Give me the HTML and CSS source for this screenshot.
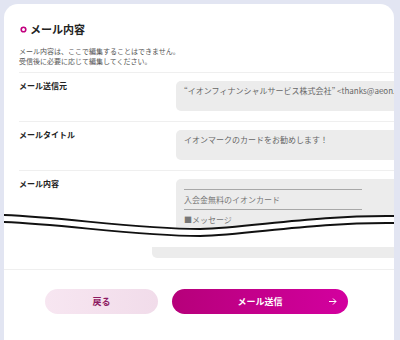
FILE: index.html
```html
<!DOCTYPE html>
<html lang="ja">
<head>
  <meta charset="UTF-8">
  <title>メール内容</title>
  <link rel="stylesheet" href="styles.css">
</head>
<body>
<div class="card">
  <div class="head">
    <h2 class="title">
      <svg class="title-mark" width="7" height="7" viewBox="0 0 7 7"><circle cx="3.5" cy="3.5" r="2.3" fill="none" stroke="#c2007f" stroke-width="1.6"/></svg>
      メール内容
    </h2>
    <p class="desc">メール内容は、ここで編集することはできません。<br>受信後に必要に応じて編集してください。</p>
  </div>

  <div class="row">
    <div class="label">メール送信元</div>
    <div class="field">“イオンフィナンシャルサービス株式会社” &lt;thanks@aeon.co.jp&gt;</div>
  </div>
  <div class="row">
    <div class="label">メールタイトル</div>
    <div class="field">イオンマークのカードをお勧めします！</div>
  </div>
  <div class="row row-body">
    <div class="label">メール内容</div>
    <div class="field field-body">
      <div class="rule"></div>
      <div class="body-line">入会金無料のイオンカード</div>
      <div class="rule"></div>
      <div class="body-line">■メッセージ</div>
    </div>
  </div>
  <div class="field-tail"></div>

  <!-- cut mark over the long mail body -->
  <svg class="cut" width="390" height="42" viewBox="0 0 390 42">
    <path d="M-2 10 C 60 12, 130 24, 196 24 C 250 22, 310 10, 392 11 L 392 42 L -2 42 Z" fill="#fff"/>
    <path d="M-2 10 C 60 12, 130 24, 196 24 C 250 22, 310 10, 392 11" fill="none" stroke="#111" stroke-width="2"/>
    <path d="M-2 17 C 60 19, 130 31, 196 31 C 250 29, 310 17, 392 18" fill="none" stroke="#111" stroke-width="2"/>
  </svg>

  <div class="actions">
    <button class="btn btn-back">戻る</button>
    <button class="btn btn-send">
      <span></span>
      <span>メール送信</span>
      <svg class="btn-arrow" width="8" height="7" viewBox="0 0 8 7"><path d="M0 3.5 H7 M4 0.5 L7 3.5 L4 6.5" fill="none" stroke="#fff" stroke-width="1"/></svg>
    </button>
  </div>
</div>
</body>
</html>
```

FILE: styles.css
```css
body {
  margin: 0;
  background: #e2e5f2;
  font-family: "Noto Sans CJK JP", "Noto Sans", sans-serif;
  color: #222;
}

.card {
  position: relative;
  margin: 4px 6px 0 4px;
  height: 336px;
  background: #fff;
  border-radius: 14px 14px 0 0;
  overflow: hidden;
}

.head {
  margin-left: 15px;
  padding-top: 18px;
  padding-bottom: 6px;
  border-bottom: 1px solid #efefef;
}
.title {
  display: flex;
  align-items: center;
  gap: 3px;
  margin: 0;
  font-size: 11px;
  line-height: 14px;
  font-weight: bold;
}
.title-mark {
  margin-left: 1px;
}
.desc {
  margin: 10px 0 0;
  font-size: 7px;
  line-height: 10px;
  color: #555;
}

.row {
  display: grid;
  grid-template-columns: 157px 1fr;
  margin-left: 15px;
  padding: 8px 0 10px;
  border-bottom: 1px solid #efefef;
}
.label {
  font-size: 8px;
  line-height: 10px;
  font-weight: bold;
}
.field {
  height: 30px;
  margin-right: -20px;
  padding: 5px 8px;
  box-sizing: border-box;
  background: #ececec;
  border-radius: 5px;
  font-size: 8px;
  line-height: 10px;
  color: #666;
  white-space: nowrap;
  overflow: hidden;
}

.row-body {
  padding-bottom: 0;
  border-bottom: none;
}
.field-body {
  height: 62px;
  padding-top: 10px;
}
.rule {
  width: 178px;
  height: 1px;
  background: #a8a8a8;
}
.body-line {
  padding: 5px 0 4px;
  font-size: 8px;
  line-height: 10px;
  color: #777;
}
.field-tail {
  height: 11px;
  margin: 6px 0 11px 148px;
  background: #ececec;
  border-radius: 0 0 0 5px;
}

.cut {
  position: absolute;
  left: 0;
  top: 201px;
}

.actions {
  display: flex;
  gap: 14px;
  padding: 19px 0 0 41px;
  border-top: 1px solid #efefef;
}
.btn {
  height: 25px;
  border: none;
  border-radius: 13px;
  font-family: inherit;
  font-size: 9px;
  font-weight: bold;
  padding: 0;
}
.btn-back {
  width: 113px;
  background: linear-gradient(90deg, #f7e6f1, #f1dcea);
  color: #8e1b63;
}
.btn-send {
  display: grid;
  grid-template-columns: 1fr auto 1fr;
  align-items: center;
  width: 176px;
  background: linear-gradient(90deg, #b6007a, #d3009f);
  color: #fff;
}
.btn-arrow {
  justify-self: end;
  margin-right: 11px;
}
```
